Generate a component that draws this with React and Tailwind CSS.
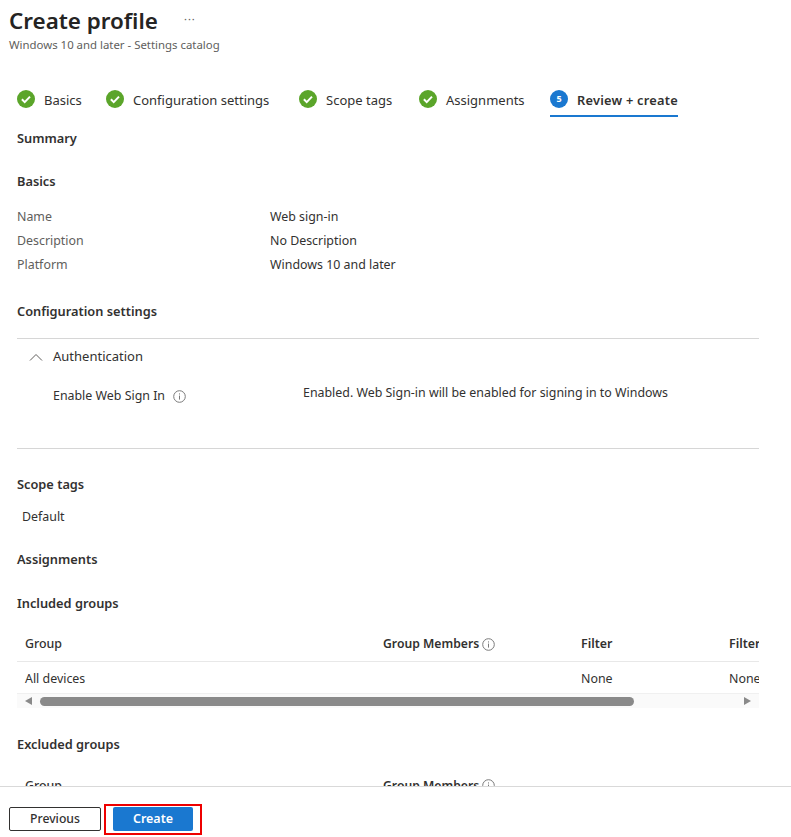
const Check = () => (
  <svg width="18" height="18" viewBox="0 0 18 18" className="shrink-0 mb-[4px]">
    <circle cx="9" cy="9" r="9" fill="#5ba52a" />
    <path d="M4.9 9.3 7.7 12.1 13 6.6" fill="none" stroke="#fff" strokeWidth="2" />
  </svg>
);

const Info = () => (
  <svg width="13" height="13" viewBox="0 0 13 13" className="shrink-0">
    <circle cx="6.5" cy="6.5" r="5.8" fill="none" stroke="#7a7a7a" strokeWidth="1" />
    <path d="M6.5 5.6v4M6.5 3.4v1.1" fill="none" stroke="#7a7a7a" strokeWidth="1" />
  </svg>
);

const Step = ({ label, w }) => (
  <div className={`flex items-center gap-[9px] h-full pt-[6px] ${w}`}>
    <Check />
    <span className="whitespace-nowrap">{label}</span>
  </div>
);

const Row = ({ label, value }) => (
  <div className="flex items-center h-6">
    <span className="w-[253px] text-[#605e5c]">{label}</span>
    <span>{value}</span>
  </div>
);

const Heading = ({ children, h }) => (
  <div className={`flex items-center font-semibold text-[12.8px] text-[#323130] ${h}`}>{children}</div>
);

const Cols = ({ a, b, c, d, className }) => (
  <div className={`flex items-center whitespace-nowrap pt-[4px] ${className}`}>
    <div className="w-[366px] shrink-0 pl-2">{a}</div>
    <div className="w-[198px] shrink-0">{b}</div>
    <div className="w-[148px] shrink-0">{c}</div>
    <div className="shrink-0">{d}</div>
  </div>
);

const MembersHead = () => (
  <span className="flex items-center gap-[3px] font-semibold text-[12.2px]">Group Members <Info /></span>
);

export default function App() {
  return (
    <div
      className="h-[837px] w-[791px] flex flex-col overflow-hidden bg-white text-[#323130] text-[12.4px]"
      style={{ fontFamily: '"Noto Sans", sans-serif' }}
    >
      <div className="h-[786px] overflow-hidden shrink-0">
        <div className="px-[9px] h-[78px] pt-[5px]">
          <div className="flex items-center h-8">
            <h1 className="text-[22.4px] font-semibold text-[#252423] leading-8">Create profile</h1>
            <span className="ml-[26px] mb-[3px] text-[#605e5c] text-[11px] tracking-[1px]">···</span>
          </div>
          <div className="text-[11.4px] text-[#605e5c] leading-4">Windows 10 and later - Settings catalog</div>
        </div>

        <div className="flex h-[39px] pl-[17px] items-center text-[13px]">
          <Step label="Basics" w="w-[89px]" />
          <Step label="Configuration settings" w="w-[193px]" />
          <Step label="Scope tags" w="w-[120px]" />
          <Step label="Assignments" w="w-[131px]" />
          <div className="flex items-center gap-[9px] h-full w-[128px] pt-[4px] border-b-2 border-[#1a78d0]">
            <span className="w-[18px] h-[18px] rounded-full bg-[#1a78d0] text-white text-[9px] font-bold flex items-center justify-center">5</span>
            <span className="font-semibold text-[12.8px] tracking-[0.25px] whitespace-nowrap mt-[4px]">Review + create</span>
          </div>
        </div>

        <div className="pl-[17px] pt-px w-[759px]">
          <Heading h="h-[42px]">Summary</Heading>
          <Heading h="h-[44px]">Basics</Heading>
          <div className="h-px" />
          <Row label="Name" value="Web sign-in" />
          <Row label="Description" value="No Description" />
          <Row label="Platform" value="Windows 10 and later" />
          <div className="h-[23px]" />
          <Heading h="h-6">Configuration settings</Heading>
          <div className="h-[14px]" />
          <div className="border-t border-b border-[#d6d6d6] h-[111px]">
            <div className="flex items-center h-[35px] pl-[12px] gap-[10px]">
              <svg width="14" height="8" viewBox="0 0 14 8" className="shrink-0">
                <path d="M1 7.5 7 1.5l6 6" fill="none" stroke="#605e5c" strokeWidth="1" />
              </svg>
              <span className="text-[13px]">Authentication</span>
            </div>
            <div className="flex pl-9 h-[38px]">
              <div className="w-[250px] flex items-center gap-[8px] h-full mt-[3px]">
                <span>Enable Web Sign In</span>
                <Info />
              </div>
              <div className="flex items-center h-[38px] whitespace-nowrap">
                Enabled. Web Sign-in will be enabled for signing in to Windows
              </div>
            </div>
          </div>
          <div className="h-[24px]" />
          <Heading h="h-6">Scope tags</Heading>
          <div className="flex items-center h-10 pl-[5px]">Default</div>
          <div className="h-[11px]" />
          <Heading h="h-6">Assignments</Heading>
          <div className="h-5" />
          <Heading h="h-6">Included groups</Heading>

          <div className="overflow-hidden mt-[8px]">
            <Cols
              className="h-[38px] border-b border-[#e8e8e8] font-semibold"
              a={<span className="font-medium">Group</span>}
              b={<MembersHead />}
              c="Filter"
              d="Filter mode"
            />
            <Cols className="h-[32px] border-b border-[#f0f0f0]" a="All devices" b="" c="None" d="None" />
            <div className="h-[14px] bg-[#fafafa] flex items-center">
              <svg width="8" height="10" viewBox="0 0 8 10" className="ml-[7px] shrink-0">
                <path d="M8 1v8L1 5z" fill="#8a8a8a" />
              </svg>
              <div className="ml-[8px] w-[594px] h-[9px] rounded-full bg-[#8a8a8a] shrink-0" />
              <svg width="8" height="10" viewBox="0 0 8 10" className="ml-[110px] shrink-0">
                <path d="M0 1v8l7-4z" fill="#8a8a8a" />
              </svg>
            </div>
          </div>

          <div className="h-[25px]" />
          <Heading h="h-6">Excluded groups</Heading>
          <div className="h-2" />
          <Cols
            className="h-[38px] font-semibold"
            a={<span className="font-medium">Group</span>}
            b={<MembersHead />}
            c=""
            d=""
          />
        </div>
      </div>

      <div className="h-[51px] border-t border-[#d9d9d9] flex items-start pl-[9px] pt-[20px] gap-[12px] shrink-0">
        <button className="w-[92px] h-6 border border-[#323130] rounded-[2px] font-medium text-[#323130] text-[12.2px] flex items-center justify-center bg-white">
          Previous
        </button>
        <div className="relative">
          <button className="w-[80px] h-6 rounded-[2px] bg-[#1a78d0] text-white font-semibold text-[12.5px] flex items-center justify-center">
            Create
          </button>
          <div className="absolute left-[-9px] top-[-3px] w-[98px] h-[31px] border-2 border-[#ee0000] pointer-events-none" />
        </div>
      </div>
    </div>
  );
}
